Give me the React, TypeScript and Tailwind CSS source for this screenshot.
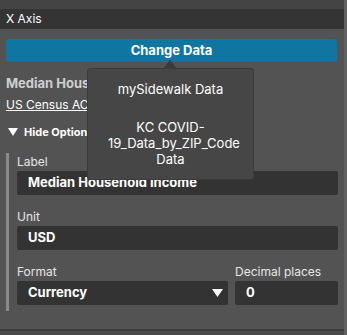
import { useState } from 'react'

const font = { fontFamily: 'Inter, "Open Sans", sans-serif' }

function Field({ label, value }: { label: string; value: string }) {
  return (
    <div className="flex flex-col">
      <label className="h-[18px] text-[12px] leading-[18px] text-[#e6e6e6]">{label}</label>
      <div className="flex h-[24px] items-center rounded-[2px] bg-[#333333] px-[11px] text-[13px] font-bold text-white">
        {value}
      </div>
    </div>
  )
}

export default function App() {
  const [open] = useState(true)

  return (
    <div className="relative flex h-[335px] w-[347px] overflow-hidden bg-[#535353] text-white" style={font}>
      <div className="flex flex-1 flex-col">
        <div className="h-[9px] bg-[#444444]" />
        <div className="flex h-[20px] items-center bg-[#343434] px-[6px] text-[12px]">X Axis</div>

        <div className="px-[6px] pt-[10px]">
          <button className="flex h-[23px] w-[331px] items-center justify-center rounded-[2px] bg-[#0e76a0] text-[13px] font-bold text-white">
            Change Data
          </button>

          <div className="mt-[12px] text-[13px] font-bold leading-[18px] text-[#cfcfcf]">Median Household Income</div>
          <div className="mt-[5px] text-[12px] leading-[16px] text-white underline">US Census ACS</div>

          <div className="mt-[12px] flex items-center gap-[6px] pl-[2px] text-[11px] font-bold leading-[14px]">
            <svg width="10" height="8" viewBox="0 0 10 8">
              <path d="M0 0h10L5 8z" fill="#fff" />
            </svg>
            <span>Hide Options</span>
          </div>

          <div className="mt-[14px] flex gap-[8px]">
            <div className="w-[3px] bg-[#8a8a8a]" />
            <div className="flex flex-1 flex-col gap-[13px] pb-[6px]">
              <Field label="Label" value="Median Household Income" />
              <Field label="Unit" value="USD" />
              <div className="flex gap-[7px]">
                <div className="flex w-[211px] flex-col">
                  <label className="h-[18px] text-[12px] leading-[18px] text-[#e6e6e6]">Format</label>
                  <div className="flex h-[24px] items-center justify-between rounded-[2px] bg-[#333333] pl-[11px] pr-[5px] text-[13px] font-bold">
                    <span>Currency</span>
                    <svg width="11" height="8" viewBox="0 0 11 8">
                      <path d="M0 0h11L5.5 8z" fill="#fff" />
                    </svg>
                  </div>
                </div>
                <div className="flex flex-1 flex-col">
                  <label className="h-[18px] text-[12px] leading-[18px] text-[#e6e6e6]">Decimal places</label>
                  <div className="flex h-[24px] items-center rounded-[2px] bg-[#333333] px-[11px] text-[13px] font-bold">0</div>
                </div>
              </div>
            </div>
          </div>
        </div>

        <div className="mt-auto h-[2px] bg-[#3c3c3c]" />
        <div className="h-[4px] bg-[#4a4a4a]" />
      </div>
      <div className="w-[3px] bg-[#616161]" />

      {open && (
        <div className="absolute left-[87px] top-[68px] h-[112px] w-[167px] rounded-[3px] border border-[#3a3a3a] bg-[#464646] px-[20px] pt-[12px] text-center text-[13px] leading-[16px] text-white">
          <svg className="absolute left-[75px] top-[-9px]" width="14" height="9" viewBox="0 0 14 9">
            <path d="M0 9L7 0l7 9z" fill="#3a3a3a" />
          </svg>
          <p>mySidewalk Data</p>
          <p className="mt-[22px]">KC COVID-19_Data_by_ZIP_Code Data</p>
        </div>
      )}
    </div>
  )
}
